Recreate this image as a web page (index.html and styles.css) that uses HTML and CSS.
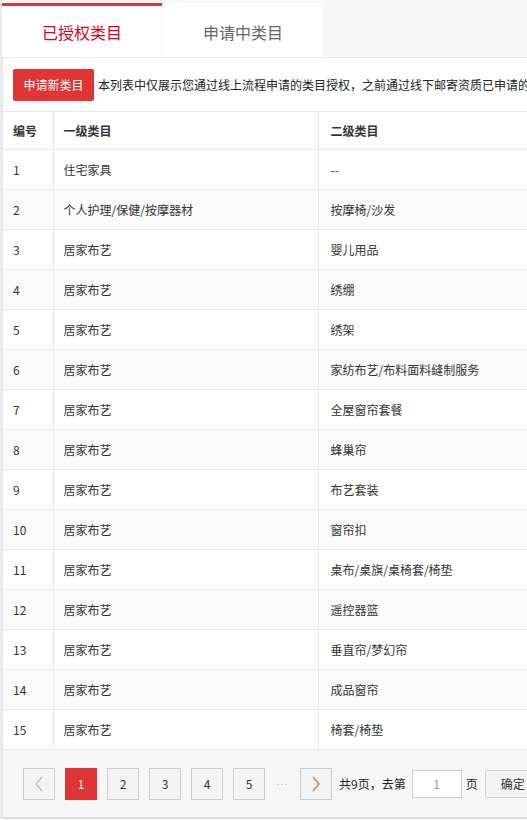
FILE: index.html
```html
<!DOCTYPE html>
<html lang="zh-CN">
<head>
<meta charset="utf-8">
<link rel="stylesheet" href="styles.css">
</head>
<body>
<div class="page">
  <div class="tabs">
    <div class="tab active">已授权类目</div>
    <div class="tab">申请中类目</div>
  </div>
  <div class="panel">
    <div class="toolbar">
      <button class="btn-new">申请新类目</button>
      <span class="notice">本列表中仅展示您通过线上流程申请的类目授权，之前通过线下邮寄资质已申请的类目授权请在其他页面查看</span>
    </div>
    <table class="grid">
      <colgroup><col class="c-no"><col class="c-l1"><col class="c-l2"></colgroup>
      <thead>
        <tr><th>编号</th><th>一级类目</th><th>二级类目</th></tr>
      </thead>
      <tbody>
        <tr><td>1</td><td>住宅家具</td><td>--</td></tr>
        <tr><td>2</td><td>个人护理/保健/按摩器材</td><td>按摩椅/沙发</td></tr>
        <tr><td>3</td><td>居家布艺</td><td>婴儿用品</td></tr>
        <tr><td>4</td><td>居家布艺</td><td>绣绷</td></tr>
        <tr><td>5</td><td>居家布艺</td><td>绣架</td></tr>
        <tr><td>6</td><td>居家布艺</td><td>家纺布艺/布料面料缝制服务</td></tr>
        <tr><td>7</td><td>居家布艺</td><td>全屋窗帘套餐</td></tr>
        <tr><td>8</td><td>居家布艺</td><td>蜂巢帘</td></tr>
        <tr><td>9</td><td>居家布艺</td><td>布艺套装</td></tr>
        <tr><td>10</td><td>居家布艺</td><td>窗帘扣</td></tr>
        <tr><td>11</td><td>居家布艺</td><td>桌布/桌旗/桌椅套/椅垫</td></tr>
        <tr><td>12</td><td>居家布艺</td><td>遥控器篮</td></tr>
        <tr><td>13</td><td>居家布艺</td><td>垂直帘/梦幻帘</td></tr>
        <tr><td>14</td><td>居家布艺</td><td>成品窗帘</td></tr>
        <tr><td>15</td><td>居家布艺</td><td>椅套/椅垫</td></tr>
      </tbody>
    </table>
    <div class="pager">
      <span class="pg disabled">
        <svg width="10" height="16" viewBox="0 0 10 16"><path d="M8 1 L2 8 L8 15" fill="none" stroke="#aac4dc" stroke-width="1.3"/></svg>
      </span>
      <span class="pg current">1</span>
      <span class="pg">2</span>
      <span class="pg">3</span>
      <span class="pg">4</span>
      <span class="pg">5</span>
      <span class="dots">···</span>
      <span class="pg">
        <svg width="10" height="16" viewBox="0 0 10 16"><path d="M2 1 L8 8 L2 15" fill="none" stroke="#c8883a" stroke-width="1.3"/></svg>
      </span>
      <span class="total">共9页，去第</span>
      <input class="goto" type="text" value="1">
      <span class="unit">页</span>
      <button class="ok">确定</button>
    </div>
  </div>
</div>
</body>
</html>
```

FILE: styles.css
```css
html, body {
  margin: 0;
  padding: 0;
  background: #fff;
  overflow: hidden;
}
body {
  font-family: "Noto Sans CJK SC", "Microsoft YaHei", sans-serif;
  font-size: 12px;
  color: #333;
}
.page {
  width: 820px;
  border-left: 2px solid #ececec;
  padding-top: 3px;
  background: #f7f7f7;
}
.tabs {
  display: flex;
  gap: 1px;
  height: 54px;
  background: #f7f7f7;
}
.tab {
  width: 160px;
  background: #fff;
  display: flex;
  align-items: center;
  justify-content: center;
  font-size: 16px;
  color: #666;
  box-sizing: border-box;
  padding-top: 3px;
}
.tab.active {
  color: #d9001b;
  border-top: 3px solid #e03535;
  padding-top: 0;
}
.panel {
  background: #fff;
  border-top: 1px solid #eaeaea;
  border-left: 1px solid #e5e5e5;
}
.toolbar {
  display: flex;
  align-items: center;
  height: 53px;
  padding-left: 10px;
  gap: 4px;
  white-space: nowrap;
}
.btn-new {
  width: 81px;
  height: 32px;
  border: none;
  border-radius: 2px;
  background: #e03535;
  color: #fff;
  font-family: inherit;
  font-size: 12px;
  padding: 0;
}
.notice {
  color: #222;
  font-size: 12px;
}
.grid {
  width: 100%;
  border-collapse: collapse;
  table-layout: fixed;
}
.c-no { width: 50px; }
.c-l1 { width: 265px; }
.grid th, .grid td {
  height: 40px;
  padding: 0 10px;
  text-align: left;
  border-top: 1px solid #e8e8e8;
  border-right: 1px solid #e8e8e8;
  box-sizing: border-box;
  white-space: nowrap;
}
.grid th:nth-child(3), .grid td:nth-child(3) { padding-left: 12px; }
.grid th {
  height: 38px;
  font-weight: bold;
  color: #333;
}
.grid td { color: #333; }
.grid tbody tr:nth-child(even) td { background: #fafafa; }
.grid tbody tr:last-child td { border-bottom: 1px solid #e8e8e8; }
.pager {
  display: flex;
  align-items: center;
  height: 67px;
  background: #f7f7f7;
  padding-left: 20px;
  gap: 10px;
  border-bottom: 2px solid #dcdcdc;
  white-space: nowrap;
}
.pg {
  width: 32px;
  height: 32px;
  box-sizing: border-box;
  border: 1px solid #ccc;
  background: #f4f4f4;
  display: flex;
  align-items: center;
  justify-content: center;
  color: #333;
  font-size: 12px;
}
.pg.current {
  background: #e03535;
  border-color: #e03535;
  color: #fff;
}
.dots {
  font-family: "Liberation Sans", sans-serif;
  font-size: 9px;
  color: #aaa;
  width: 15px;
  text-align: center;
  letter-spacing: 1px;
}
.total {
  margin-left: -3px;
  color: #222;
  font-size: 12px;
}
.goto {
  width: 50px;
  height: 28px;
  box-sizing: border-box;
  border: 1px solid #ccc;
  background: #fff;
  text-align: center;
  font-family: inherit;
  font-size: 12px;
  color: #999;
  margin-left: -4px;
  padding: 0;
}
.unit {
  margin-left: -6px;
  color: #222;
}
.ok {
  margin-left: -3px;
  height: 28px;
  width: 56px;
  box-sizing: border-box;
  border: 1px solid #ccc;
  border-radius: 2px;
  background: #f4f4f4;
  font-family: inherit;
  font-size: 12px;
  color: #333;
  padding: 0;
}
```
